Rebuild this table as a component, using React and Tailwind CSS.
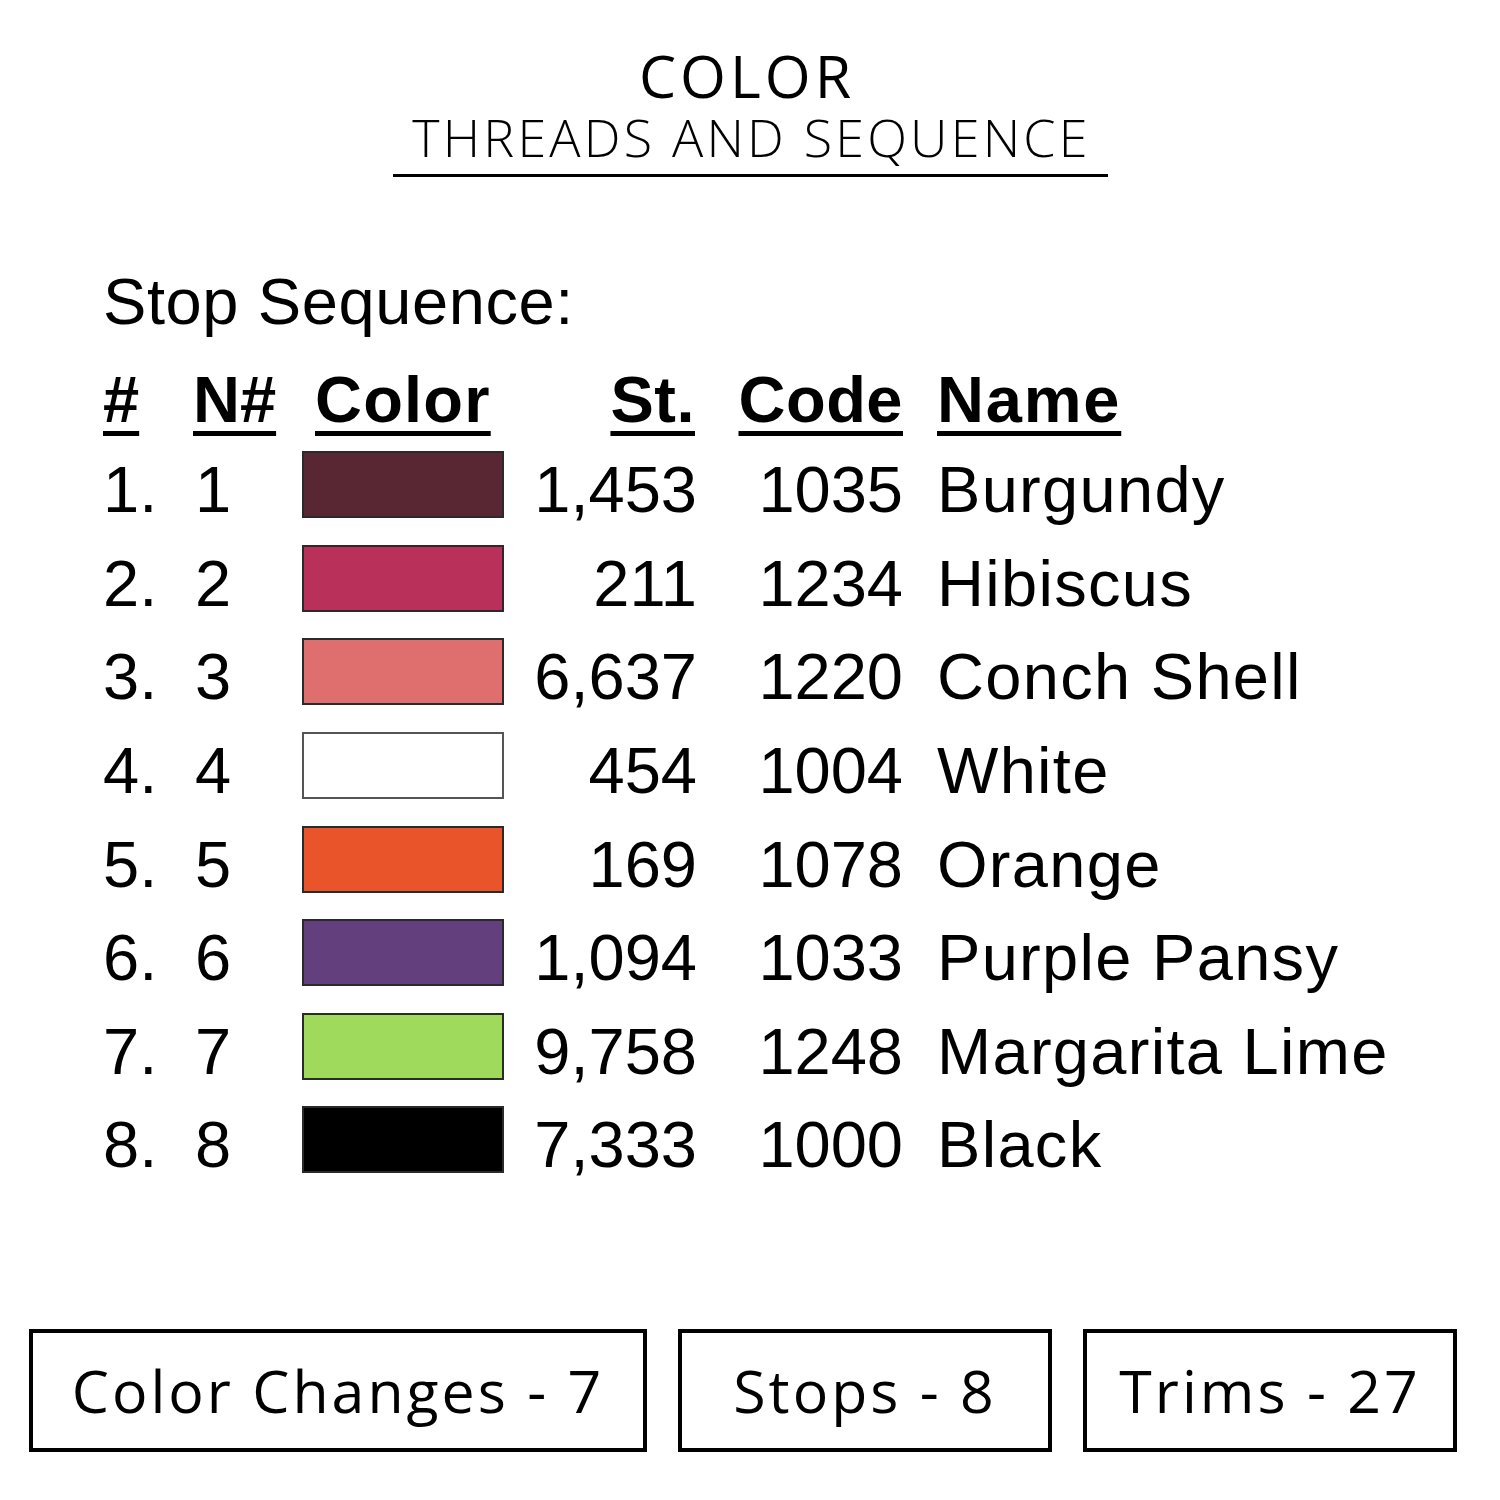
import React from "react";

const rows = [
  { n: "1", color: "#592634", st: "1,453", code: "1035", name: "Burgundy" },
  { n: "2", color: "#b9315a", st: "211", code: "1234", name: "Hibiscus" },
  { n: "3", color: "#df6e6e", st: "6,637", code: "1220", name: "Conch Shell" },
  { n: "4", color: "#ffffff", st: "454", code: "1004", name: "White" },
  { n: "5", color: "#e9542a", st: "169", code: "1078", name: "Orange" },
  { n: "6", color: "#643f7e", st: "1,094", code: "1033", name: "Purple Pansy" },
  { n: "7", color: "#a0da5c", st: "9,758", code: "1248", name: "Margarita Lime" },
  { n: "8", color: "#000000", st: "7,333", code: "1000", name: "Black" },
];

const gridCols = "grid grid-cols-[90px_109px_202px_193px_206px_1fr]";
const ul = "underline decoration-[5px] underline-offset-[9px]";

export default function App() {
  return (
    <div className="w-[1500px] h-[1500px] bg-white text-black flex flex-col">
      {/* Title */}
      <div className="flex flex-col items-center pt-[44px]">
        <div className="font-['Open_Sans',sans-serif] font-medium text-[59px] leading-[62px] tracking-[4px] pl-[4px] pr-[10px]">
          COLOR
        </div>
        <div className="font-['Open_Sans',sans-serif] font-light text-[52px] leading-[56px] tracking-[3.2px] pl-[3px] mt-[3px]">
          THREADS AND SEQUENCE
        </div>
        <div className="w-[715px] h-[3px] bg-black mt-[9px] ml-[1px]"></div>
      </div>

      {/* Table */}
      <div className="font-['Liberation_Sans',Arial,sans-serif] text-[65px] leading-[65px] pl-[103px] pt-[92px]">
        <div className="h-[65px] tracking-[0.6px]">Stop Sequence:</div>
        <div className={`${gridCols} h-[82px] items-start pt-[11px] mt-[22px] font-bold`}>
          <div><span className={ul}>#</span></div>
          <div><span className={ul}>N#</span></div>
          <div className="pl-[13px]"><span className={`${ul} tracking-[1.2px]`}>Color</span></div>
          <div className="text-right pr-[2px]"><span className={`${ul} tracking-[0.5px]`}>St.</span></div>
          <div className="text-right"><span className={`${ul} tracking-[0.5px]`}>Code</span></div>
          <div className="pl-[34px]"><span className={`${ul} tracking-[1.8px]`}>Name</span></div>
        </div>
        {rows.map((r) => (
          <div key={r.n} className={`${gridCols} h-[93.57px] items-center`}>
            <div className="pt-[10px]">{r.n}.</div>
            <div className="pl-[2px] pt-[10px]">{r.n}</div>
            <div
              className="h-[67px] border-2"
              style={{ backgroundColor: r.color, borderColor: r.n === "4" ? "#555" : "#2a2a2a" }}
            ></div>
            <div className="text-right pt-[10px]">{r.st}</div>
            <div className="text-right pt-[10px]">{r.code}</div>
            <div className="pl-[34px] whitespace-nowrap tracking-[1.3px] pt-[10px]">{r.name}</div>
          </div>
        ))}
      </div>

      {/* Bottom boxes */}
      <div className="flex gap-[31px] pl-[29px] mt-auto mb-[48px] font-['Open_Sans',sans-serif] text-[59px] tracking-[3px]">
        <div className="w-[618px] h-[123px] border-[4px] border-black flex items-center justify-center">
          Color Changes - 7
        </div>
        <div className="w-[374px] h-[123px] border-[4px] border-black flex items-center justify-center">
          Stops - 8
        </div>
        <div className="w-[374px] h-[123px] border-[4px] border-black flex items-center justify-center">
          Trims - 27
        </div>
      </div>
    </div>
  );
}
